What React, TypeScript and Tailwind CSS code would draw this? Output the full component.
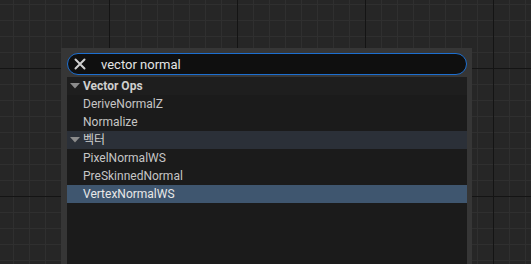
import React from 'react'

type Row =
  | { kind: 'header'; label: string; tint?: boolean; light?: boolean }
  | { kind: 'item'; label: string; selected?: boolean }

const ROWS: Row[] = [
  { kind: 'header', label: 'Vector Ops' },
  { kind: 'item', label: 'DeriveNormalZ' },
  { kind: 'item', label: 'Normalize' },
  { kind: 'header', label: '벡터', tint: true, light: true },
  { kind: 'item', label: 'PixelNormalWS' },
  { kind: 'item', label: 'PreSkinnedNormal' },
  { kind: 'item', label: 'VertexNormalWS', selected: true },
]

function CloseIcon() {
  return (
    <svg width="12" height="12" viewBox="0 0 12 12" className="shrink-0">
      <path d="M1.5 1.5 L10.5 10.5 M10.5 1.5 L1.5 10.5" stroke="#cfcfcf" strokeWidth="2" strokeLinecap="round" />
    </svg>
  )
}

function Caret() {
  return (
    <svg width="10" height="6" viewBox="0 0 10 6" className="shrink-0">
      <path d="M0 0 L10 0 L5 5.5 Z" fill="#8c8c8c" />
    </svg>
  )
}

export default function App() {
  return (
    <div
      className="w-[531px] h-[264px] overflow-hidden bg-[#262626] pl-[61px] pt-[48px] [font-family:Roboto,'Noto_Sans_CJK_KR',sans-serif]
        [background-image:linear-gradient(to_right,#141414_1px,transparent_1px),linear-gradient(to_bottom,#141414_1px,transparent_1px),linear-gradient(to_right,#2f2f2f_1px,transparent_1px),linear-gradient(to_bottom,#2f2f2f_1px,transparent_1px)]
        [background-size:128px_128px,128px_128px,16px_16px,16px_16px]
        [background-position:109px_0,0_68px,13px_0,0_4px]"
    >
      {/* Search popup */}
      <div className="w-[411px] h-[230px] bg-[#363636] pt-[5px] pl-[6px] pr-[5px] flex flex-col gap-[2px]">
        <div className="h-[22px] rounded-full border border-[#1d6fd0] bg-[#0f0f0f] flex items-center pl-[6px]">
          <CloseIcon />
          <span className="ml-[15px] text-[13px] text-[#e4e4e4] leading-none">vector normal</span>
        </div>

        <div className="flex-1 bg-[#1b1b1b] flex flex-col">
          {ROWS.map((row, i) =>
            row.kind === 'header' ? (
              <div
                key={i}
                className={`h-[18px] flex items-center pl-[3px] ${row.tint ? 'bg-[#2b3038]' : 'bg-[#1e1e1e]'}`}
              >
                <Caret />
                <span
                  className={`ml-[3px] text-[12px] text-[#cfcfcf] leading-none ${row.light ? 'font-normal' : 'font-bold'}`}
                >
                  {row.label}
                </span>
              </div>
            ) : (
              <div
                key={i}
                className={`h-[18px] flex items-center pl-[16px] ${row.selected ? 'bg-[#3f566f]' : ''}`}
              >
                <span className={`text-[12px] leading-none ${row.selected ? 'text-[#e8e8e8]' : 'text-[#c6c6c6]'}`}>
                  {row.label}
                </span>
              </div>
            )
          )}
        </div>
      </div>
    </div>
  )
}
